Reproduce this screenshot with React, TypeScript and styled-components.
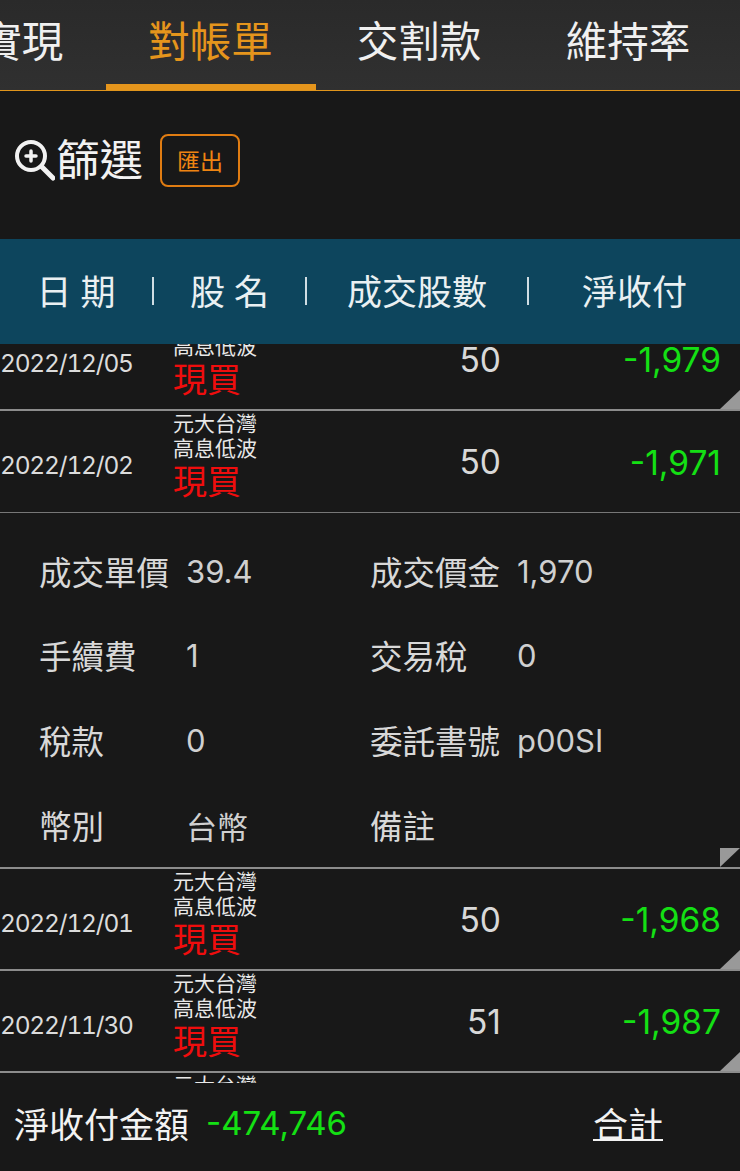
import React from 'react';
import styled, { createGlobalStyle } from 'styled-components';

const GlobalStyle = createGlobalStyle`
	html, body {
		margin: 0;
		padding: 0;
		background: #181818;
	}
	* {
		box-sizing: border-box;
	}
`;

const Page = styled.div`
	width: 740px;
	height: 1171px;
	display: flex;
	flex-direction: column;
	overflow: hidden;
	background: #181818;
	color: #e4e4e4;
	font-family: Inter, 'Noto Sans CJK TC', sans-serif;
`;

const Tabs = styled.nav`
	display: flex;
	flex: none;
	height: 91px;
	margin-left: -103px;
	width: 843px;
	background: linear-gradient(#2a2a2a, #303030);
	border-bottom: 1px solid #e0951c;
`;

const Tab = styled.div<{ $active?: boolean }>`
	flex: none;
	width: ${(p) => (p.$active ? 210 : 209)}px;
	margin-right: ${(p) => (p.$active ? -1 : 0)}px;
	height: 90px;
	display: flex;
	align-items: flex-start;
	justify-content: center;
	padding-top: 13px;
	padding-right: 1px;
	font-size: 41.5px;
	line-height: 58px;
	color: ${(p) => (p.$active ? '#e5951c' : '#f0f0f0')};
	border-bottom: 6px solid ${(p) => (p.$active ? '#e5951c' : 'transparent')};
`;

const FilterBar = styled.div`
	flex: none;
	height: 148px;
	display: flex;
	align-items: center;
	padding-left: 15px;
	padding-bottom: 10px;
`;

const FilterText = styled.span`
	font-size: 43.5px;
	line-height: 60px;
	color: #f2f2f2;
	margin-left: 1px;
`;

const ExportButton = styled.button`
	width: 80px;
	height: 53px;
	margin-left: 17px;
	padding: 0;
	background: transparent;
	border: 2px solid #e07c12;
	border-radius: 8px;
	color: #ee8412;
	font-family: inherit;
	font-size: 23px;
`;

const TableHead = styled.div`
	flex: none;
	height: 105px;
	display: flex;
	align-items: center;
	padding-bottom: 2px;
	background: #0d455d;
	font-size: 35px;
	word-spacing: -1px;
	color: #eaf0f2;
`;

const HeadCell = styled.div<{ $width: number }>`
	flex: none;
	width: ${(p) => p.$width}px;
	text-align: center;
	margin-top: -2px;
`;

const HeadSep = styled.div`
	flex: none;
	width: 2px;
	height: 28px;
	background: #cfdde3;
`;

const List = styled.div`
	flex: 1;
	min-height: 0;
	overflow: hidden;
`;

const ListInner = styled.div`
	margin-top: -35px;
`;

const Row = styled.div<{ $open?: boolean }>`
	position: relative;
	display: grid;
	grid-template-columns: 173px 190px 138px 220px;
	height: 102px;
	align-items: center;
	border-bottom: ${(p) => (p.$open ? '1px solid #777' : '2px solid #8c8c8c')};
`;

const DateCell = styled.div`
	padding-top: 7px;
	font-size: 24.5px;
	font-variant-numeric: tabular-nums;
	letter-spacing: -1.2px;
	color: #dcdcdc;
`;

const NameCell = styled.div`
	align-self: start;
`;

const NameLine = styled.div`
	font-size: 21px;
	line-height: 25px;
	color: #e8e8e8;
`;

const Action = styled.div`
	font-size: 34px;
	line-height: 36px;
	margin-top: 3px;
	color: #f00d0d;
`;

const Qty = styled.div`
	text-align: right;
	padding-top: 1px;
	font-size: 33.5px;
	color: #d8d8d8;
`;

const Amount = styled.div`
	text-align: right;
	padding-top: 2px;
	font-size: 33.5px;
	color: #14e014;
`;

const Corner = styled.div`
	position: absolute;
	right: 0;
	bottom: 0;
	width: 0;
	height: 0;
	border-style: solid;
	border-width: 0 0 19px 20px;
	border-color: transparent transparent #999 transparent;
`;

const Detail = styled.div`
	position: relative;
	height: 356px;
	padding-top: 15px;
	display: grid;
	grid-template-columns: 147px 184px 147px 1fr;
	grid-auto-rows: 84.6px;
	align-items: center;
	padding-left: 39px;
	border-bottom: 2px solid #8c8c8c;
`;

const DetailLabel = styled.div`
	font-size: 32.5px;
	color: #d8d8d8;
	white-space: nowrap;
`;

const DetailValue = styled.div`
	padding-top: 2px;
	font-size: 31px;
	color: #d0d0d0;
`;

const OpenCorner = styled.div`
	position: absolute;
	right: 0;
	bottom: 0;
	width: 0;
	height: 0;
	border-style: solid;
	border-width: 19px 20px 0 0;
	border-color: #999 transparent transparent transparent;
`;

const Footer = styled.footer`
	flex: none;
	height: 88px;
	display: flex;
	align-items: center;
	padding: 0 77px 9px 14px;
`;

const FooterLabel = styled.span`
	font-size: 35px;
	color: #f2f2f2;
`;

const FooterValue = styled.span`
	margin-left: 17px;
	font-size: 33px;
	color: #14e014;
`;

const FooterLink = styled.a`
	margin-left: auto;
	font-size: 35px;
	color: #f2f2f2;
	text-decoration: underline;
	text-decoration-thickness: 2px;
	text-underline-offset: 1px;
`;

const rows = [
	{ date: '2022/12/05', qty: '50', amount: '-1,979' },
	{ date: '2022/12/02', qty: '50', amount: '-1,971', open: true },
	{ date: '2022/12/01', qty: '50', amount: '-1,968' },
	{ date: '2022/11/30', qty: '51', amount: '-1,987' },
	{ date: '2022/11/29', qty: '51', amount: '-1,980' },
];

const details = [
	['成交單價', '39.4', '成交價金', '1,970'],
	['手續費', '1', '交易稅', '0'],
	['稅款', '0', '委託書號', 'p00SI'],
	['幣別', '台幣', '備註', ''],
];

function ZoomIcon() {
	return (
		<svg width="40" height="42" viewBox="0 0 40 42" fill="none" stroke="#f2f2f2" strokeLinecap="round">
			<circle cx="16" cy="17" r="14" strokeWidth="4" />
			<path d="M27 28 L38 39" strokeWidth="5" />
			<path d="M16 12 V22 M11 17 H21" strokeWidth="3.5" />
		</svg>
	);
}

export default function App(): JSX.Element {
	return (
		<Page>
			<GlobalStyle />
			<Tabs>
				<Tab>未實現</Tab>
				<Tab $active>對帳單</Tab>
				<Tab>交割款</Tab>
				<Tab>維持率</Tab>
			</Tabs>
			<FilterBar>
				<ZoomIcon />
				<FilterText>篩選</FilterText>
				<ExportButton>匯出</ExportButton>
			</FilterBar>
			<TableHead>
				<HeadCell $width={152}>日 期</HeadCell>
				<HeadSep />
				<HeadCell $width={151}>股 名</HeadCell>
				<HeadSep />
				<HeadCell $width={220}>成交股數</HeadCell>
				<HeadSep />
				<HeadCell $width={211}>淨收付</HeadCell>
			</TableHead>
			<List>
				<ListInner>
					{rows.map((row) => (
						<React.Fragment key={row.date}>
							<Row $open={row.open}>
								<DateCell>{row.date}</DateCell>
								<NameCell>
									<NameLine>元大台灣</NameLine>
									<NameLine>高息低波</NameLine>
									<Action>現買</Action>
								</NameCell>
								<Qty>{row.qty}</Qty>
								<Amount>{row.amount}</Amount>
								{!row.open && <Corner />}
							</Row>
							{row.open && (
								<Detail>
									{details.flat().map((text, i) =>
										i % 2 === 0 ? (
											<DetailLabel key={i}>{text}</DetailLabel>
										) : (
											<DetailValue key={i}>{text}</DetailValue>
										),
									)}
									<OpenCorner />
								</Detail>
							)}
						</React.Fragment>
					))}
				</ListInner>
			</List>
			<Footer>
				<FooterLabel>淨收付金額</FooterLabel>
				<FooterValue>-474,746</FooterValue>
				<FooterLink>合計</FooterLink>
			</Footer>
		</Page>
	);
}
